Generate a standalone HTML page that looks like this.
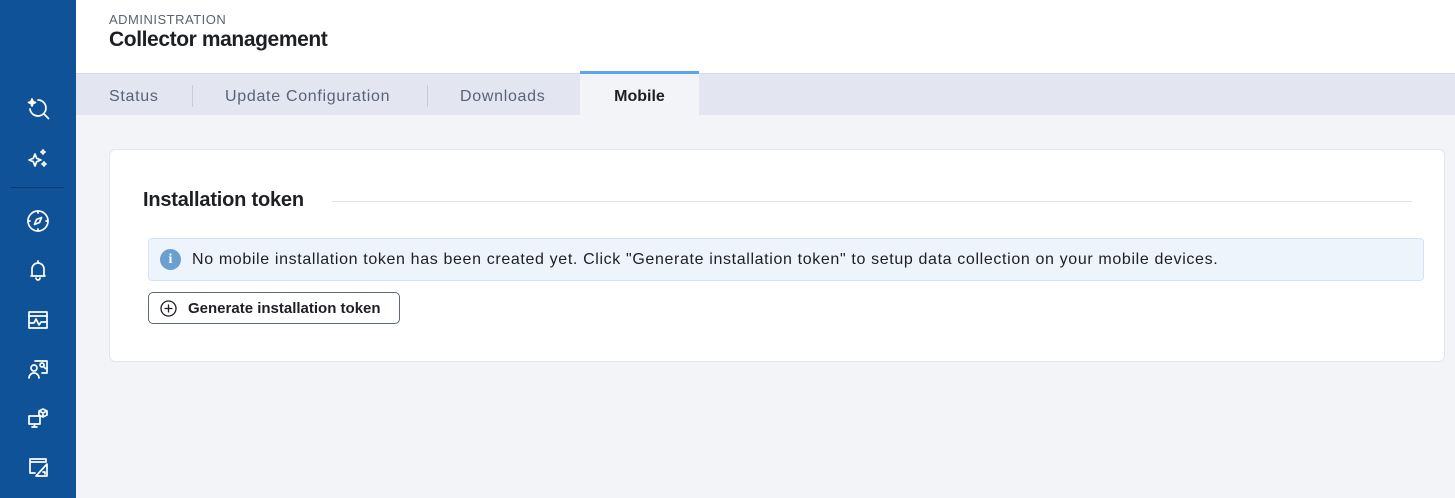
<!DOCTYPE html>
<html><head><meta charset="utf-8"><style>
*{margin:0;padding:0;box-sizing:border-box}
body{width:1455px;height:498px;overflow:hidden;font-family:"Liberation Sans",sans-serif;background:#f3f4f8;position:relative}
.side{position:absolute;left:0;top:0;width:76px;height:498px;background:#0f5298}
.side svg{position:absolute;left:26px;width:24px;height:24px;fill:none;stroke:#fff;stroke-width:1.7;stroke-linecap:round;stroke-linejoin:round}
.sep{position:absolute;left:11px;top:187px;width:53px;height:1px;background:#0a3a6e}
.head{position:absolute;left:76px;top:0;right:0;height:73px;background:#fff}
.adm{position:absolute;left:33px;top:12px;font-size:13px;color:#5a6278;letter-spacing:0.5px}
.title{position:absolute;left:33px;top:28px;font-size:21px;color:#1d1f24;font-weight:bold;letter-spacing:-0.4px}
.tabs{position:absolute;left:76px;top:73px;right:0;height:42px;background:#e3e6f0;border-top:1px solid #d8dbe5}
.tab{position:absolute;top:2px;height:42px;line-height:42px;font-size:16px;color:#5a6278;letter-spacing:0.7px}
.div{position:absolute;top:11px;width:1px;height:22px;background:#c8ccd8}
.act{position:absolute;left:504px;top:-3px;width:119px;height:45px;background:#f3f4f8;border-top:3px solid #5ea6e8;text-align:center;line-height:46px;font-weight:bold;color:#1d1f24;font-size:16px}
.card{position:absolute;left:109px;top:149px;width:1336px;height:213px;background:#fff;border:1px solid #e2e5ee;border-radius:6px}
.h2{position:absolute;left:33px;top:39px;font-size:20px;font-weight:bold;color:#1d1f24;background:#fff;padding-right:16px;letter-spacing:-0.2px}
.line{position:absolute;left:222px;top:51px;width:1080px;height:1px;background:#e2e5ee}
.info{position:absolute;left:38px;top:88px;width:1276px;height:43px;background:#eef4fb;border:1px solid #d4e3f3;border-radius:4px}
.info .i{position:absolute;left:11px;top:10px;width:21px;height:21px;border-radius:50%;background:#6a9fd0;color:#fff;font-weight:bold;font-size:14px;text-align:center;line-height:21px;font-family:"Liberation Serif",serif}
.info span{position:absolute;left:43px;top:12px;font-size:16px;color:#1d1f24;letter-spacing:0.64px;white-space:nowrap}
.btn{position:absolute;left:38px;top:142px;width:252px;height:32px;border:1px solid #5e6780;border-radius:5px;font-size:15px;font-weight:bold;color:#1d1f24}
.btn span{position:absolute;left:39px;top:7px}
.btn svg{position:absolute;left:11px;top:7px}
</style></head><body>
<div class="side">
<svg style="top:96px" viewBox="0 0 24 24"><path d="M6 3l1 2.5L9.5 6.5 7 7.5 6 10 5 7.5 2.5 6.5 5 5.5z" fill="#fff"/><path d="M12 4a8 8 0 1 1-8 9"/><path d="M18 18l4.5 4.5"/></svg>
<svg style="top:147px" viewBox="0 0 24 24"><path d="M9 7l1.7 4.3L15 13l-4.3 1.7L9 19l-1.7-4.3L3 13l4.3-1.7z"/><path d="M17 3l.8 1.2L19 5l-1.2.8L17 7l-.8-1.2L15 5l1.2-.8z"/><path d="M18 15l.8 1.2L20 17l-1.2.8L18 19l-.8-1.2L16 17l1.2-.8z"/></svg>
<div class="sep"></div>
<svg style="top:209px" viewBox="0 0 24 24"><circle cx="12" cy="12" r="10"/><path d="M15.5 8.5l-2 5-5 2 2-5z"/><path d="M12 2v2M12 20v2M2 12h2M20 12h2"/></svg>
<svg style="top:258px" viewBox="0 0 24 24"><path d="M6 18V11a6 6 0 0 1 12 0v7H5h14"/><path d="M12 3v2M10 20a2 2 0 0 0 4 0"/></svg>
<svg style="top:308px" viewBox="0 0 24 24"><rect x="3" y="4" width="18" height="16"/><path d="M3 8h18M3 15h5l2-4 3 6 2-3h6"/></svg>
<svg style="top:357px" viewBox="0 0 24 24"><path d="M9 4h12v12h-5"/><circle cx="8" cy="11" r="3"/><path d="M3 21a5 5 0 0 1 10 0"/><circle cx="16" cy="8" r="2"/><path d="M17.5 9.5l2 2"/></svg>
<svg style="top:406px" viewBox="0 0 24 24"><rect x="3" y="10" width="11" height="8"/><path d="M6 21h5M8.5 18v3"/><path d="M17 3l4 2v4l-4 2-4-2V5z M13 5l4 2 4-2M17 7v4"/></svg>
<svg style="top:455px" viewBox="0 0 24 24"><path d="M4 4h16v3H4zM4 7v11h5"/><path d="M21 9L10 21h11zM17 17h2v2"/></svg>
</div>
<div class="head"><div class="adm">ADMINISTRATION</div><div class="title">Collector management</div></div>
<div class="tabs">
<div class="tab" style="left:33px">Status</div>
<div class="div" style="left:116px"></div>
<div class="tab" style="left:149px">Update Configuration</div>
<div class="div" style="left:351px"></div>
<div class="tab" style="left:384px">Downloads</div>
<div class="act">Mobile</div>
</div>
<div class="card">
<div class="line"></div>
<div class="h2">Installation token</div>
<div class="info"><div class="i">i</div><span>No mobile installation token has been created yet. Click "Generate installation token" to setup data collection on your mobile devices.</span></div>
<div class="btn"><svg width="17" height="17" viewBox="0 0 17 17" fill="none" stroke="#1d1f24" stroke-width="1.3"><circle cx="8.5" cy="8.5" r="7.5"/><path d="M8.5 4.5v8M4.5 8.5h8"/></svg><span>Generate installation token</span></div>
</div>
</body></html>
